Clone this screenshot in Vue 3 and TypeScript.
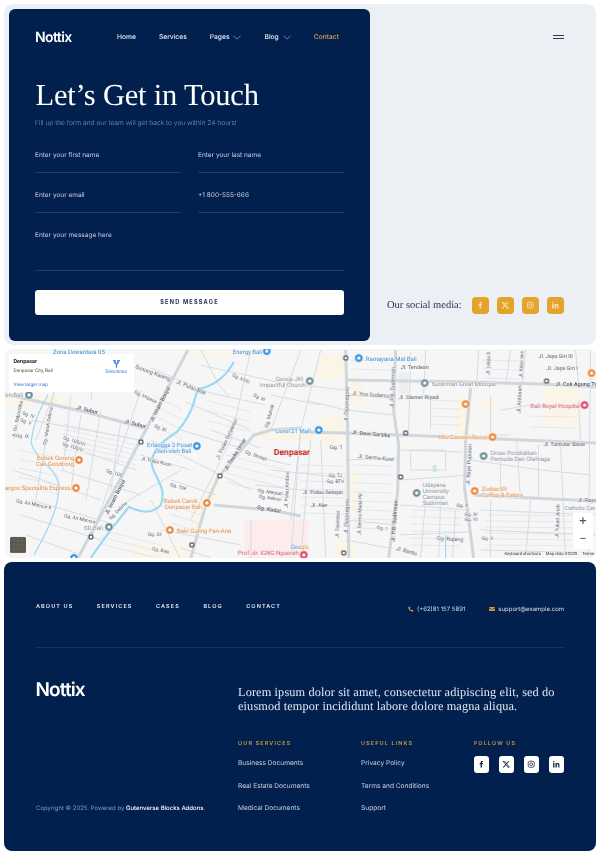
<script setup lang="ts">
interface Label { t: string; x: number; y: number; r?: number; c?: string; s?: number; w?: number }
interface Pin { x: number; y: number; c: string }

const navItems = [
  { label: 'Home', chevron: false, active: false },
  { label: 'Services', chevron: false, active: false },
  { label: 'Pages', chevron: true, active: false },
  { label: 'Blog', chevron: true, active: false },
  { label: 'Contact', chevron: false, active: true },
]
const socials = ['f', 'x', 'i', 'l']
const footerNav = ['ABOUT US', 'SERVICES', 'CASES', 'BLOG', 'CONTACT']
const services = ['Business Documents', 'Real Estate Documents', 'Medical Documents']
const links = ['Privacy Policy', 'Terms and Conditions', 'Support']

const zones: [number, number, number, number, string][] = [
  [243, 520, 65, 38, '#fcecec'],
  [0, 396, 70, 10, '#faf5e6'], [24, 350, 20, 8, '#faf5e6'], [180, 350, 90, 5, '#faf5e6'],
  [318, 355, 28, 24, '#faf5e6'], [350, 375, 12, 30, '#faf5e6'], [320, 415, 22, 30, '#faf5e6'],
  [455, 395, 16, 45, '#faf5e6'], [478, 400, 16, 10, '#faf5e6'], [545, 385, 35, 40, '#faf5e6'],
  [205, 478, 14, 22, '#faf5e6'], [190, 500, 12, 30, '#faf5e6'], [130, 545, 60, 13, '#faf5e6'],
  [345, 470, 12, 40, '#faf5e6'], [335, 540, 20, 18, '#faf5e6'], [255, 432, 60, 8, '#faf5e6'],
  [398, 372, 10, 22, '#eceef0'], [432, 465, 4, 7, '#cfe8d3'],
]
const majorRoads = [
  '77,558 120,478 150,420 187,350',
  '30,400 85,412 143,428',
  '190,558 205,505 217,478 253,435 270,430 300,428',
  '300,432 345,433 400,435 450,437 520,440 596,443',
  '395,350 393,412 398,445 397,492 388,558',
  '345,350 347,433 348,558',
  '470,388 465,440 464,488 473,558',
  '345,380 470,382 540,384 596,387',
  '473,495 530,498 596,501',
  '213,505 270,510 300,516',
  '0,393 30,400',
]
const minorRoads = [
  '200,350 218,385 228,396','150,368 210,393 265,405','250,350 230,440 190,520','300,350 270,430','320,350 300,430 290,520',
  '35,440 60,375','60,350 48,420 35,500','70,395 62,470','30,420 140,440','65,445 135,470','60,470 140,495','30,500 115,525','20,515 100,540',
  '12,470 100,500','25,535 80,555','120,505 180,470','140,455 190,470','150,440 250,490','170,480 215,495','160,530 240,545','180,548 210,558',
  '185,402 250,430','210,430 260,448','200,365 290,385','150,500 180,560','260,458 290,465','255,485 345,495','270,470 345,478','300,430 290,558','310,440 300,558',
  '320,440 325,558','345,410 393,415','345,395 393,398','345,460 398,458','345,520 395,525','345,540 388,548','410,352 408,430','425,350 423,395','430,395 430,430',
  '400,450 462,452','410,450 445,450 445,470 410,470 410,450','400,480 470,475','400,505 470,510','400,535 470,532','425,500 420,558','440,500 438,558','455,510 452,558',
  '478,350 476,388','510,350 505,385','525,350 522,385','490,395 490,435 510,435','500,410 530,405','516,440 520,500','538,445 538,498','560,445 565,558','575,350 578,385',
  '480,510 596,515','480,530 596,535','480,550 596,553','490,500 490,558','530,500 525,558','578,400 580,440','590,350 588,558','470,460 540,470','540,470 590,475','500,460 500,495',
  '250,520 250,558','305,400 345,410','300,385 345,390','270,395 320,405','180,430 240,448','100,410 85,500','80,415 70,490','120,420 110,490','95,350 90,400','140,390 90,540',
]
// Blocks of parallel lanes: x0, y0, x1, y1, step, count
const laneBlocks: [number, number, number, number, number, number][] = [
  [62, 424, 136, 440, 5, 6], [18, 450, 58, 458, 9, 5], [152, 395, 182, 410, 10, 4],
  [205, 400, 250, 412, 10, 3], [225, 455, 285, 470, 9, 4], [350, 360, 390, 361, 9, 2],
  [300, 465, 345, 466, 8, 7], [352, 465, 392, 466, 9, 8], [482, 360, 520, 361, 9, 3],
  [530, 405, 575, 406, 11, 3], [485, 515, 580, 516, 6, 6], [410, 510, 460, 511, 7, 6],
  [100, 530, 160, 545, 7, 3], [170, 505, 200, 515, 9, 3], [430, 400, 460, 401, 8, 4],
]
const lanes = laneBlocks.flatMap(([x0, y0, x1, y1, step, n]) =>
  Array.from({ length: n }, (_, i) => `${x0},${y0 + i * step} ${x1},${y1 + i * step}`),
)
const riverMain = 'M233 362 C226 375 215 386 197 389 C193 400 193 412 176 432 C160 442 150 452 151 465 C155 480 166 488 160 505 C150 515 140 512 128 507 C118 520 105 535 90 558'
const riverLeft = 'M47 395 C38 410 32 425 30 442 C34 460 56 468 58 485 C58 505 50 525 33 555'
const riverThin = 'M445 535 L445 558'

const labels: Label[] = [
  { t: 'Zona Dewantara 05', x: 52, y: 353.5, c: '#3a8fd8', s: 6 },
  { t: 'Energy Bali', x: 232, y: 354, c: '#3a8fd8', s: 6 },
  { t: 'Ramayana Mal Bali', x: 365, y: 361, c: '#3a8fd8', s: 6 },
  { t: 'Jl. Tendean', x: 400, y: 369, s: 5.5 },
  { t: 'Jl. Jaya Giri III', x: 538, y: 358, s: 5.5 },
  { t: 'Jl. Jaya Giri I', x: 546, y: 370, s: 5.5 },
  { t: 'Jl. Cok Agung Tr', x: 555, y: 386, s: 5.5, w: 600 },
  { t: 'Sudirman Great Mosque', x: 431, y: 386, c: '#8a9198', s: 6 },
  { t: 'Jl. Yos Sudarso', x: 351, y: 395, s: 5.5, r: 4 },
  { t: 'Jl. Slamet Riyadi', x: 398, y: 399, s: 5.5 },
  { t: 'Bali Royal Hospital', x: 530, y: 408, c: '#d8506a', s: 6 },
  { t: 'Jl. Dewi Sartika', x: 351, y: 434, s: 5.5, r: 5, w: 600 },
  { t: 'Mie Gacoan Renon', x: 438, y: 439, c: '#e08a3c', s: 6 },
  { t: 'Jl. Tantular Barat', x: 543, y: 446, s: 5.5 },
  { t: 'Gg. 1', x: 329, y: 449, s: 5.5 },
  { t: 'Jl. Serma Kawi', x: 357, y: 458, s: 5.5, r: 5 },
  { t: 'Dinas Pendidikan', x: 490, y: 455, c: '#8a9198', s: 6 },
  { t: 'Pemuda Dan Olahraga', x: 490, y: 461, c: '#8a9198', s: 6 },
  { t: 'Gg. TJ', x: 328, y: 477, s: 4.8 },
  { t: 'Gg. BTV', x: 326, y: 483, s: 4.8 },
  { t: 'Jl. Pulau Selayar', x: 302, y: 494, s: 5.5 },
  { t: 'Jl. Aler', x: 310, y: 507, s: 5.5 },
  { t: 'Udayana', x: 422, y: 487, c: '#8a9198', s: 6 },
  { t: 'University', x: 422, y: 493, c: '#8a9198', s: 6 },
  { t: 'Campus', x: 422, y: 499, c: '#8a9198', s: 6 },
  { t: 'Sudirman', x: 422, y: 505, c: '#8a9198', s: 6 },
  { t: 'ZodiacXII', x: 481, y: 491, c: '#e08a3c', s: 6 },
  { t: 'Coffee & Eatery', x: 481, y: 497, c: '#e08a3c', s: 6 },
  { t: 'Gg. II', x: 456, y: 507, s: 4.8 },
  { t: 'Gg. IV', x: 464, y: 516, s: 4.8 },
  { t: 'Gg. VI', x: 464, y: 521, s: 4.8 },
  { t: 'Gg. V', x: 481, y: 540, s: 4.8 },
  { t: 'Gg. Kujang', x: 436, y: 540, s: 5.5, r: 3 },
  { t: 'Jl. Rayu', x: 577, y: 502, s: 5.5 },
  { t: 'Catholic Cat', x: 564, y: 510, c: '#8a9198', s: 5.6 },
  { t: 'Jl. Bantu', x: 395, y: 550, s: 5.5, r: 15 },
  { t: 'Denpasar', x: 273, y: 455, c: '#c5221f', s: 8.5, w: 700 },
  { t: 'Level 21 Mall', x: 275, y: 433, c: '#3a8fd8', s: 6 },
  { t: 'Gereja JKI', x: 275, y: 381, c: '#8a9198', s: 6 },
  { t: 'Impactful Church', x: 259, y: 387, c: '#8a9198', s: 6 },
  { t: 'Jl. Subur', x: 75, y: 409, s: 5.5, r: 14, w: 600 },
  { t: 'Jl. Subur', x: 123, y: 423, s: 5.5, r: 14, w: 600 },
  { t: 'Sunung Karang', x: 134, y: 368, s: 5.5, r: 20 },
  { t: 'Jl. Pulau Bak', x: 175, y: 383, s: 5.5, r: 22 },
  { t: 'Jl. Imam Bonjol', x: 152, y: 422, s: 5.5, r: -63, w: 600 },
  { t: 'Jl. Imam Bonjol', x: 107, y: 515, s: 5.5, r: -63, w: 600 },
  { t: 'Gg. Imbasa', x: 133, y: 393, s: 4.8, r: 25 },
  { t: 'Gg. XI', x: 153, y: 427, s: 4.8, r: 22 },
  { t: 'Gg. XVIII', x: 231, y: 376, s: 4.8, r: 25 },
  { t: 'Gg. XI', x: 252, y: 396, s: 4.8, r: 25 },
  { t: 'Gg. Manuk', x: 267, y: 428, s: 5, r: -75 },
  { t: 'Erlangga 2 Pusat', x: 146, y: 447, c: '#3a8fd8', s: 6 },
  { t: 'Oleh-oleh Bali', x: 154, y: 453, c: '#3a8fd8', s: 6 },
  { t: 'Jl. Pulau Roon', x: 140, y: 460, s: 4.8, r: 12 },
  { t: 'Jl. Pulau Sulawesi', x: 218, y: 460, s: 5.5, r: -65 },
  { t: 'Jl. Teuku Umar', x: 226, y: 471, s: 5.5, r: -58, w: 600 },
  { t: 'Gg. Sesapi', x: 244, y: 453, s: 4.8, r: 20 },
  { t: 'Gg. Merpati', x: 257, y: 492, s: 4.8, r: 8 },
  { t: 'Gg. Kelinci', x: 258, y: 498, s: 4.8, r: 8 },
  { t: 'Gg. Kadal', x: 256, y: 509, s: 5.5, r: 10, w: 600 },
  { t: 'Jl. Pulau Ambon', x: 287, y: 508, s: 5, r: -88 },
  { t: 'Gg. 100/VI', x: 62, y: 439, s: 4.8, r: 18 },
  { t: 'Gg. 100/V', x: 61, y: 445, s: 4.8, r: 18 },
  { t: 'Gg. 100', x: 105, y: 472, s: 4.8, r: 18 },
  { t: 'Gg. 104', x: 169, y: 486, s: 4.8, r: 15 },
  { t: 'Gg. Air Mancur II', x: 15, y: 502, s: 4.8, r: 12 },
  { t: 'Gg. Air Mancur', x: 63, y: 517, s: 4.8, r: 12 },
  { t: 'Gg. Delima', x: 110, y: 520, s: 4.8, r: -45 },
  { t: 'Bebek Goreng', x: 36, y: 460, c: '#e08a3c', s: 6 },
  { t: 'Cak Gondrong', x: 35, y: 466, c: '#e08a3c', s: 6 },
  { t: 'argos Specialita Espresso', x: 4, y: 490, c: '#e08a3c', s: 6 },
  { t: 'Bebek Carok', x: 163, y: 503, c: '#e08a3c', s: 6 },
  { t: 'Denpasar Bali', x: 164, y: 509, c: '#e08a3c', s: 6 },
  { t: 'Babi Guling Pan-Ana', x: 176, y: 533, c: '#e08a3c', s: 6 },
  { t: 'SD Bali', x: 83, y: 530, c: '#8a9198', s: 6 },
  { t: 'Gg. 33', x: 147, y: 536, s: 4.8 },
  { t: 'Gg. Bais', x: 151, y: 550, s: 4.8, r: 12 },
  { t: 'Prof. dr. IGNG Ngoerah', x: 237, y: 555, c: '#d8506a', s: 6 },
  { t: 'Goo', x: 290, y: 549, c: '#4a78c8', s: 6 },
  { t: 'gle', x: 300, y: 549, c: '#d8a030', s: 6 },
  { t: 'on Bali', x: 4, y: 397, c: '#8a9198', s: 6 },
  { t: 'Gg. IV', x: 21, y: 414, s: 4.8, r: 20 },
  { t: 'Gg. V', x: 19, y: 421, s: 4.8, r: 20 },
  { t: 'Gg. IX', x: 15, y: 437, s: 4.8, r: 5 },
  { t: 'Jl. Gn. Rabinraka', x: 14, y: 438, s: 5, r: -78 },
  { t: 'Gg. Muruh Delima', x: 45, y: 445, s: 4.8, r: -80 },
  { t: 'Jl. Diponegoro', x: 347, y: 422, s: 5.5, r: -88 },
  { t: 'Jl. Diponegoro', x: 347, y: 534, s: 5.5, r: -88 },
  { t: 'Jl. P.B. Sudirman', x: 393, y: 408, s: 5.5, r: -88 },
  { t: 'Jl. P.B. Sudirman', x: 394, y: 542, s: 5.5, r: -86, w: 600 },
  { t: 'Jl. Raya Puputan', x: 469, y: 485, s: 5.5, r: -87 },
  { t: 'Jl. Letda R', x: 489, y: 375, s: 5, r: -88 },
  { t: 'Jl. Kebo Iwa', x: 522, y: 378, s: 5, r: -88 },
  { t: 'Jl. Antasari', x: 520, y: 413, s: 5.5, r: -88 },
  { t: 'Jl. Serma Made Pil', x: 360, y: 535, s: 5, r: -88 },
  { t: 'Jl. Tukad Jinah', x: 558, y: 538, s: 5, r: -88 },
  { t: 'Jl. Tanimbar', x: 338, y: 538, s: 5, r: -88 },
  { t: 'Gg. 1', x: 376, y: 529, s: 4.8, r: 8 },
]
const pins: Pin[] = [
  { x: 266, y: 351, c: '#2e8fe0' }, { x: 358, y: 358, c: '#2e8fe0' }, { x: 424, y: 383, c: '#6f8a93' },
  { x: 309, y: 381, c: '#6f8a93' }, { x: 318, y: 430, c: '#2e8fe0' }, { x: 196, y: 446, c: '#2e8fe0' },
  { x: 78, y: 460, c: '#e8843a' }, { x: 75, y: 488, c: '#e8843a' }, { x: 206, y: 503, c: '#e8843a' },
  { x: 169, y: 530, c: '#e8843a' }, { x: 465, y: 404, c: '#e8843a' }, { x: 492, y: 437, c: '#e8843a' },
  { x: 474, y: 491, c: '#e8843a' }, { x: 591, y: 373, c: '#e8843a' }, { x: 584, y: 405, c: '#e0405f' },
  { x: 483, y: 456, c: '#6f8a93' }, { x: 416, y: 493, c: '#6f8a93' }, { x: 28, y: 395, c: '#6f8a93' },
  { x: 108, y: 527, c: '#6f8a93' }, { x: 73, y: 558, c: '#2e8fe0' }, { x: 303, y: 555, c: '#e0405f' },
]
const shields: [number, number][] = [
  [345, 358], [546, 381], [405, 433], [400, 477], [140, 442], [219, 476], [90, 537], [191, 545], [343, 553],
]
</script>

<template>
  <div class="page">
    <section class="hero">
      <div class="panel">
        <header class="nav">
          <span class="logo logo-sm">Nottix</span>
          <nav class="menu">
            <a v-for="item in navItems" :key="item.label" class="menu-item" :class="{ active: item.active }">
              {{ item.label }}
              <svg v-if="item.chevron" class="chev" viewBox="0 0 10 6"><path d="M.5.8 5 5 9.5.8" /></svg>
            </a>
          </nav>
        </header>
        <h1 class="title">Let’s Get in Touch</h1>
        <p class="sub">Fill up the form and our team will get back to you within 24 hours!</p>
        <form class="form" @submit.prevent>
          <div class="field">Enter your first name</div>
          <div class="field">Enter your last name</div>
          <div class="field">Enter your email</div>
          <div class="field">+1 800-555-666</div>
          <div class="field field-wide">Enter your message here</div>
          <button class="send" type="submit">SEND MESSAGE</button>
        </form>
      </div>
      <aside class="side">
        <button class="burger" aria-label="Menu"><i></i><i></i></button>
        <div class="social-row">
          <span class="social-label">Our social media:</span>
          <div class="social-icons">
            <a v-for="s in socials" :key="s" class="social-btn">
              <svg viewBox="0 0 24 24">
                <path v-if="s === 'f'" d="M14 8.500V6.700c0-.8.5-1 1-1h2V2.500h-2.800C11.400 2.500 10 4.300 10 6.500v2H7.500V12H10v9.500h4V12h2.600l.4-3.500z" />
                <path v-else-if="s === 'x'" d="M18.200 2.500h3.300l-7.200 8.200 8.500 10.800h-6.700l-5.200-6.600-6 6.600H1.600l7.700-8.800L1.200 2.500H8l4.700 6 5.500-6zm-1.200 17h1.800L7 4.400H5z" />
                <path v-else-if="s === 'l'" d="M6.900 8.800H3V21h3.900V8.800zM5 3a2.200 2.200 0 1 0 0 4.400A2.200 2.200 0 0 0 5 3zm16 10.600c0-3.300-1.800-5-4.200-5-1.900 0-2.800 1-3.200 1.800V8.800H9.800c.1 1.100 0 12.200 0 12.200h3.800v-6.800c0-.4 0-.7.1-1 .3-.7 1-1.500 2-1.500 1.400 0 2 1.100 2 2.700V21H21v-7.400z" />
                <g v-else class="ig"><rect x="3.500" y="3.500" width="17" height="17" rx="4.500" /><circle cx="12" cy="12" r="4" /></g>
              </svg>
            </a>
          </div>
        </div>
      </aside>
    </section>

    <section class="map">
      <svg class="map-svg" viewBox="4 349 592 209">
        <rect x="0" y="345" width="600" height="220" fill="#f6f6f7" />
        <rect v-for="(z, i) in zones" :key="'z' + i" :x="z[0]" :y="z[1]" :width="z[2]" :height="z[3]" :fill="z[4]" />
        <polyline v-for="(r, i) in lanes" :key="'n' + i" :points="r" class="road-lane" />
        <polyline v-for="(r, i) in minorRoads" :key="'m' + i" :points="r" class="road-minor" />
        <polyline v-for="(r, i) in majorRoads" :key="'j' + i" :points="r" class="road-major" />
        <path :d="riverMain" class="river" />
        <path :d="riverLeft" class="river river-thin" />
        <path :d="riverThin" class="river river-thin" />
        <text v-for="(l, i) in labels" :key="'l' + i" class="map-label"
          :x="l.x" :y="l.y" :font-size="l.s || 5.5" :font-weight="l.w || 400" :fill="l.c || '#5a6068'"
          :transform="l.r ? `rotate(${l.r} ${l.x} ${l.y})` : undefined">{{ l.t }}</text>
        <g v-for="(s, i) in shields" :key="'s' + i">
          <rect :x="s[0] - 2.5" :y="s[1] - 2.5" width="5" height="5" rx="1.4" fill="#4d5b66" />
          <rect :x="s[0] - 1.2" :y="s[1] - 1.2" width="2.4" height="2.4" fill="#fff" />
        </g>
        <g v-for="(p, i) in pins" :key="'p' + i">
          <circle :cx="p.x" :cy="p.y" r="4.2" :fill="p.c" stroke="#fff" stroke-width=".7" />
          <rect :x="p.x - 1.5" :y="p.y - 1.5" width="3" height="3" rx=".6" fill="#fff" />
        </g>
        <rect x="9" y="537" width="16" height="16" rx="1.5" fill="#5d5750" />
        <path d="M9 541h16M9 545h16M9 549h16M13 537v16M17 537v16M21 537v16" stroke="#736c62" stroke-width="1" stroke-dasharray="1.5 1.5" />
      </svg>
      <div class="map-card">
        <div class="map-card-main">
          <strong>Denpasar</strong>
          <span>Denpasar City, Bali</span>
          <a>View larger map</a>
        </div>
        <a class="directions">
          <svg viewBox="0 0 12 12"><path d="M6 11.500V7L2.800 3.600M6 7l3.200-3.400M1.500 2.200h2.700v2.700M10.500 2.200H7.800v2.700" /></svg>
          Directions
        </a>
      </div>
      <div class="zoom"><span>+</span><span>−</span></div>
      <div class="attribution"><span>Keyboard shortcuts</span><span>Map data ©2025</span><span>Terms</span></div>
    </section>

    <footer class="footer">
      <div class="foot-top">
        <nav class="foot-nav"><a v-for="n in footerNav" :key="n">{{ n }}</a></nav>
        <div class="contacts">
          <span class="contact">
            <svg viewBox="0 0 12 12"><path d="M2.600.8 4.500 3.400 3.400 4.800c.6 1.400 1.900 2.900 3.700 3.800l1.500-1.100 2.500 1.900c-.4 1.300-1.300 1.900-2.400 1.800C4.400 10.700 1 6.900.7 3.100.7 2 1.300 1.200 2.600.8z" /></svg>
            (+62)81 157 5891
          </span>
          <span class="contact">
            <svg viewBox="0 0 12 12"><path d="M.5 2h11v1.200L6 6.300.5 3.200zM.5 4.500 6 7.600l5.500-3.100V10H.5z" /></svg>
            support@example.com
          </span>
        </div>
      </div>
      <div class="foot-main">
        <div class="foot-left">
          <span class="logo logo-lg">Nottix</span>
          <p class="copy">Copyright © 2025. Powered by <b>Gutenverse Blocks Addons</b>.</p>
        </div>
        <div class="foot-right">
          <p class="lorem">Lorem ipsum dolor sit amet, consectetur adipiscing elit, sed do eiusmod tempor incididunt labore dolore magna aliqua.</p>
          <div class="cols">
            <div class="col">
              <h4>OUR SERVICES</h4>
              <a v-for="s in services" :key="s">{{ s }}</a>
            </div>
            <div class="col">
              <h4>USEFUL LINKS</h4>
              <a v-for="s in links" :key="s">{{ s }}</a>
            </div>
            <div class="col">
              <h4>FOLLOW US</h4>
              <div class="follow">
                <a v-for="s in socials" :key="s" class="follow-btn">
                  <svg viewBox="0 0 24 24">
                    <path v-if="s === 'f'" d="M14 8.500V6.700c0-.8.5-1 1-1h2V2.500h-2.800C11.400 2.500 10 4.300 10 6.500v2H7.500V12H10v9.500h4V12h2.600l.4-3.500z" />
                    <path v-else-if="s === 'x'" d="M18.200 2.500h3.300l-7.200 8.200 8.500 10.800h-6.700l-5.200-6.600-6 6.600H1.600l7.700-8.800L1.200 2.500H8l4.700 6 5.500-6zm-1.200 17h1.800L7 4.400H5z" />
                    <path v-else-if="s === 'l'" d="M6.900 8.800H3V21h3.900V8.800zM5 3a2.200 2.200 0 1 0 0 4.400A2.200 2.200 0 0 0 5 3zm16 10.600c0-3.300-1.800-5-4.200-5-1.900 0-2.800 1-3.200 1.800V8.800H9.800c.1 1.100 0 12.200 0 12.200h3.800v-6.800c0-.4 0-.7.1-1 .3-.7 1-1.500 2-1.500 1.400 0 2 1.100 2 2.700V21H21v-7.400z" />
                    <g v-else class="ig"><rect x="3.500" y="3.500" width="17" height="17" rx="4.500" /><circle cx="12" cy="12" r="4" /></g>
                  </svg>
                </a>
              </div>
            </div>
          </div>
        </div>
      </div>
    </footer>
  </div>
</template>

<style>
html, body { margin: 0; background: #fff; }
</style>

<style scoped>
* { box-sizing: border-box; }
.page {
  width: 600px; height: 855px; padding: 4px; display: flex; flex-direction: column; gap: 4px;
  font-family: Inter, "Liberation Sans", sans-serif; overflow: hidden;
  text-rendering: geometricPrecision; will-change: transform;
}
.hero {
  height: 341px; flex: none; background: #eceff4; border-radius: 9px; padding: 5px 4.500px 4px;
  display: flex;
}
.panel {
  width: 361.500px; flex: none; background: #02204e; border-radius: 6px; padding: 21px 26.500px 0;
  color: #fff;
}
.nav { display: flex; align-items: center; height: 14px; }
.logo { font-weight: 600; color: #fff; display: block; }
.logo-sm { font-size: 14px; letter-spacing: -0.6px; width: 82px; flex: none; }
.logo-lg { font-size: 19px; letter-spacing: -0.9px; line-height: 16px; position: relative; margin-left: -.5px; }
.logo-lg::after { content: ""; position: absolute; left: 37.500px; top: 0; width: 2px; height: 2px; border-radius: 50%; background: #e4a42b; }
.menu { display: flex; align-items: center; gap: 23px; flex: none; }
.menu-item { font-size: 6.700px; font-weight: 500; color: #e3e8f2; display: flex; align-items: center; gap: 4px; white-space: nowrap; }
.menu-item.active { color: #d9a441; }
.chev { width: 8px; height: 5px; fill: none; stroke: #9fb0cc; stroke-width: .8; }
.title {
  font-family: "Liberation Serif", serif; font-weight: 400; font-size: 30.500px; line-height: 36px; letter-spacing: -.2px;
  margin: 33px 0 0 .5px; color: #fff; white-space: nowrap;
}
.sub { font-size: 6.650px; font-weight: 300; color: #8494b2; margin: 5px 0 0; line-height: 10px; }
.form { display: grid; grid-template-columns: 146px 146px; column-gap: 17px; margin-top: 17px; }
.field {
  padding-top: 5px; font-size: 6.500px; line-height: 10px; color: #c4cde0;
  border-bottom: 1px solid #1c3a6c; height: 28px; margin-bottom: 12px;
}
.field-wide { grid-column: 1 / -1; height: 46px; margin-bottom: 0; }
.send {
  grid-column: 1 / -1; height: 24.500px; margin-top: 19px; background: #fff; border: 0; border-radius: 3px;
  color: #1a2a4f; font: 700 5.600px Inter, "Liberation Sans", sans-serif; letter-spacing: 1.200px; padding: 0;
}
.side { flex: 1; display: flex; flex-direction: column; align-items: flex-end; justify-content: space-between; padding: 25px 26.500px 27px 17px; }
.burger { display: flex; flex-direction: column; gap: 2.500px; background: none; border: 0; padding: 0; margin: .5px 1px 0 0; }
.burger i { display: block; width: 11px; height: 1px; background: #2b3a58; }
.social-row { display: flex; align-items: center; width: 100%; }
.social-label { font-family: "Liberation Serif", serif; font-size: 10.500px; color: #1f2c4c; width: 85px; flex: none; white-space: nowrap; }
.social-icons { display: flex; gap: 8px; }
.social-btn { width: 17px; height: 17px; border-radius: 4px; background: #e4a42b; display: flex; align-items: center; justify-content: center; }
.social-btn svg { width: 8.500px; height: 8.500px; fill: #fbe6bf; }
.social-btn .ig, .follow-btn .ig { fill: none; stroke-width: 2.200; }
.social-btn .ig { stroke: #fbe6bf; }
.map { position: relative; height: 209px; flex: none; border-radius: 7px; overflow: hidden; margin: 0 0 0 .5px; }
.map-svg { display: block; width: 100%; height: 100%; filter: blur(.25px); }
.road-lane { fill: none; stroke: #dfe3e8; stroke-width: .8; }
.road-minor { fill: none; stroke: #d6dce3; stroke-width: 1; }
.road-major { fill: none; stroke: #cfd6dc; stroke-width: 3; }
.river { fill: none; stroke: #9bd9f0; stroke-width: 2.200; }
.river-thin { stroke-width: 1.200; }
.map-label { font-family: Roboto, "Liberation Sans", sans-serif; paint-order: stroke; stroke: #f7f7f8; stroke-width: 1px; }
.map-card {
  position: absolute; left: 4.500px; top: 5px; width: 125px; height: 38px; background: #fff;
  display: flex; justify-content: space-between; padding: 5px 7px 0 4.500px; font-family: Roboto, "Liberation Sans", sans-serif;
}
.map-card-main { display: flex; flex-direction: column; }
.map-card-main strong { font-size: 5.500px; font-weight: 700; color: #222; line-height: 7px; }
.map-card-main span { font-size: 4.800px; color: #555; line-height: 6px; margin-top: 3px; }
.map-card-main a { font-size: 4.800px; color: #2a74d8; line-height: 6px; margin-top: 8px; }
.directions { display: flex; flex-direction: column; align-items: center; font-size: 4.800px; color: #2a74d8; gap: 2px; }
.directions svg { width: 9px; height: 9px; fill: none; stroke: #3c86dc; stroke-width: 1.700; }
.zoom { position: absolute; right: 3px; top: 164px; width: 20px; height: 36px; background: #fff; display: flex; flex-direction: column; font: 400 13px Roboto, sans-serif; color: #555; text-align: center; }
.zoom span { height: 18px; line-height: 18px; }
.attribution { position: absolute; right: 1px; bottom: 0; display: flex; gap: 5px; font: 400 4.200px/6px Roboto, sans-serif; color: #333; background: #f5f5f6cc; padding: 0 1px; }
.footer {
  height: 289px; flex: none; background: #02204e; border-radius: 8px; padding: 0 32px;
  display: flex; flex-direction: column; color: #fff;
}
.foot-top { height: 85.500px; display: flex; justify-content: space-between; border-bottom: 1px solid #17336a; }
.foot-nav { display: flex; gap: 23.500px; padding-top: 42px; }
.foot-nav a { font-size: 5.500px; font-weight: 600; letter-spacing: 1.100px; line-height: 7px; color: #e8ecf4; white-space: nowrap; }
.contacts { display: flex; gap: 24px; padding-top: 43px; }
.contact { display: flex; align-items: center; gap: 3px; height: 8px; font-size: 6px; color: #d8dfec; white-space: nowrap; }
.contact svg { width: 6px; height: 6px; fill: #e4a42b; }
.foot-main { flex: 1; display: flex; }
.foot-left { width: 202px; flex: none; display: flex; flex-direction: column; padding-top: 34px; }
.copy { margin: 107px 0 0; font-size: 6px; line-height: 8px; color: #8898b6; white-space: nowrap; }
.copy b { color: #fff; font-weight: 500; }
.foot-right { flex: 1; padding-top: 37px; }
.lorem { font-family: "Liberation Serif", serif; font-size: 12.300px; line-height: 14.500px; color: #e2e7f1; margin: 0; letter-spacing: .12px; }
.cols { display: grid; grid-template-columns: 123px 113px 1fr; margin-top: 27px; }
.col { display: flex; flex-direction: column; }
.col h4 { margin: 0 0 11.500px; font-size: 5.500px; line-height: 7px; font-weight: 600; color: #c99a3c; letter-spacing: 1.100px; }
.col a { font-size: 6.600px; line-height: 9px; color: #c6d0e2; margin-bottom: 13.700px; white-space: nowrap; }
.follow { display: flex; gap: 10px; margin-top: -3.500px; }
.col .follow-btn { width: 15px; height: 17px; background: #fff; border-radius: 3px; display: flex; align-items: center; justify-content: center; margin: 0; }
.follow-btn svg { width: 8.500px; height: 8.500px; fill: #1a2a4a; }
.follow-btn .ig { stroke: #1a2a4a; }
</style>
